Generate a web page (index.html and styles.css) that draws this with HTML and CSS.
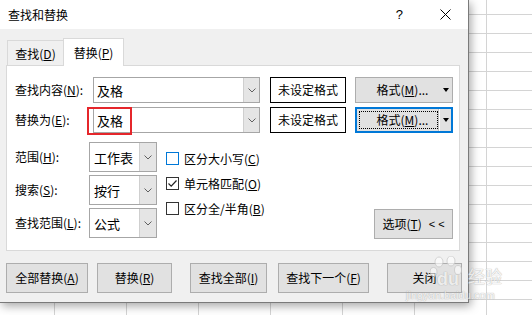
FILE: index.html
```html
<!DOCTYPE html>
<html lang="zh-CN">
<head>
<meta charset="utf-8">
<title>查找和替换</title>
<link rel="stylesheet" href="styles.css">
</head>
<body>
<div class="dialog">
  <div class="titlebar">
    <span class="title">查找和替换</span>
    <span class="help">?</span>
    <span class="close"><svg width="11" height="11" viewBox="0 0 11 11"><path d="M0.5 0.5L10.5 10.5M10.5 0.5L0.5 10.5" stroke="#000" stroke-width="1" fill="none"/></svg></span>
  </div>
  <div class="body">
    <div class="tabs">
      <div class="tab">查找(<u>D</u>)</div>
      <div class="tab active">替换(<u>P</u>)</div>
    </div>
    <div class="panel">
      <div class="row">
        <span class="label">查找内容(<u>N</u>):</span>
        <div class="combo wide"><span class="combo-text">及格</span><span class="combo-btn"><svg width="8" height="5" viewBox="0 0 8 5"><path d="M0.5 0.5L4 4L7.5 0.5" stroke="#606060" fill="none"/></svg></span></div>
        <div class="fmtbox">未设定格式</div>
        <div class="fmtbtn"><span class="fmt-main">格式(<u>M</u>)...</span><span class="fmt-arrow"><i class="tri"></i></span></div>
      </div>
      <div class="row row2">
        <span class="label">替换为(<u>E</u>):</span>
        <div class="combo wide"><span class="combo-text">及格</span><span class="combo-btn"><svg width="8" height="5" viewBox="0 0 8 5"><path d="M0.5 0.5L4 4L7.5 0.5" stroke="#606060" fill="none"/></svg></span><span class="redmark"></span></div>
        <div class="fmtbox">未设定格式</div>
        <div class="fmtbtn focused"><span class="fmt-main"><span class="focusrect">格式(<u>M</u>)...</span></span><span class="sep"></span><span class="fmt-arrow"><i class="tri"></i></span></div>
      </div>
      <div class="options">
        <div class="opt-grid">
          <span class="label">范围(<u>H</u>):</span>
          <div class="combo small"><span class="combo-text">工作表</span><span class="combo-btn"><svg width="8" height="5" viewBox="0 0 8 5"><path d="M0.5 0.5L4 4L7.5 0.5" stroke="#606060" fill="none"/></svg></span></div>
          <span class="label">搜索(<u>S</u>):</span>
          <div class="combo small"><span class="combo-text">按行</span><span class="combo-btn"><svg width="8" height="5" viewBox="0 0 8 5"><path d="M0.5 0.5L4 4L7.5 0.5" stroke="#606060" fill="none"/></svg></span></div>
          <span class="label">查找范围(<u>L</u>):</span>
          <div class="combo small"><span class="combo-text">公式</span><span class="combo-btn"><svg width="8" height="5" viewBox="0 0 8 5"><path d="M0.5 0.5L4 4L7.5 0.5" stroke="#606060" fill="none"/></svg></span></div>
        </div>
        <div class="checks">
          <div class="check"><span class="box hover"></span>区分大小写(<u>C</u>)</div>
          <div class="check"><span class="box"><svg width="11" height="11" viewBox="0 0 11 11"><path d="M1.5 5.5L4.2 8.2L9.5 2.5" stroke="#222" stroke-width="1.2" fill="none"/></svg></span>单元格匹配(<u>O</u>)</div>
          <div class="check"><span class="box"></span>区分全/半角(<u>B</u>)</div>
        </div>
        <div class="btn optbtn">选项(<u>T</u>)<span class="lt">&lt; &lt;</span></div>
      </div>
    </div>
    <div class="buttons">
      <div class="btn b1">全部替换(<u>A</u>)</div>
      <div class="btn b2">替换(<u>R</u>)</div>
      <div class="btn b3">查找全部(<u>I</u>)</div>
      <div class="btn b4">查找下一个(<u>F</u>)</div>
      <div class="btn b5">关闭</div>
    </div>
  </div>
</div>
<div class="watermark">
  <svg class="paw" width="34" height="32" viewBox="0 0 34 32">
    <ellipse cx="9" cy="6" rx="4" ry="5" />
    <ellipse cx="21" cy="5" rx="4" ry="5" />
    <ellipse cx="3.5" cy="16" rx="3.5" ry="4.5" />
    <ellipse cx="28" cy="14" rx="3.5" ry="4.5" />
  </svg>
  <span class="wm-du">du</span><span class="wm-jy">经验</span>
  <span class="wm-url">jingyan.baidu.com</span>
</div>
</body>
</html>
```
FILE: styles.css
```css
* { box-sizing: border-box; }
html, body { margin: 0; padding: 0; }
body {
  width: 532px;
  height: 315px;
  overflow: hidden;
  position: relative;
  font-family: "Noto Sans CJK SC", "Microsoft YaHei", sans-serif;
  font-size: 12px;
  line-height: 1;
  color: #000;
  background-color: #fff;
  background-image:
    linear-gradient(to right, #d4d4d4 1px, transparent 1px),
    linear-gradient(to bottom, #d4d4d4 1px, transparent 1px);
  background-size: 72px 100%, 100% 19px;
  background-position: 54px 0, 0 14px;
}
u { text-decoration: underline; text-underline-offset: 1px; }

.dialog {
  width: 469px;
  height: 303px;
  background: #f0f0f0;
  border-right: 1px solid #7a7a7a;
  border-bottom: 1px solid #7a7a7a;
  box-shadow: 2px 3px 9px rgba(0, 0, 0, 0.35);
  display: flex;
  flex-direction: column;
}
.titlebar {
  height: 29px;
  background: #fff;
  display: flex;
  align-items: center;
  padding: 0 17px 0 8px;
}
.title { flex: 1; font-size: 12px; }
.help { font-size: 13px; margin-right: 37px; font-family: "Liberation Sans", sans-serif; }
.close { display: flex; }

.body { flex: 1; padding: 9px 0 0 6px; }

.tabs {
  display: flex;
  align-items: flex-end;
  height: 27px;
  margin-left: 1px;
}
.tab {
  height: 25px;
  border: 1px solid #d9d9d9;
  border-bottom: none;
  background: #f0f0f0;
  display: flex;
  align-items: center;
  justify-content: center;
  width: 57px;
  padding-top: 2px;
}
.tab.active {
  width: 61px;
  height: 28px;
  margin-left: -1px;
  margin-bottom: -1px;
  background: #fff;
  position: relative;
  z-index: 1;
  padding-top: 0;
}

.panel {
  width: 454px;
  height: 186px;
  background: #fff;
  border: 1px solid #d9d9d9;
  padding: 11px 6px 0 8px;
}
.row { display: flex; height: 26px; align-items: stretch; }
.row2 { margin-top: 4px; }
.label { display: flex; align-items: center; white-space: nowrap; }
.row .label { width: 78px; }

.combo {
  display: flex;
  border: 1px solid #a6a6a6;
  background: #fff;
  position: relative;
}
.combo.wide { width: 167px; }
.combo-text { flex: 1; display: flex; align-items: center; padding-left: 3px; font-size: 13px; }
.combo-btn {
  width: 16px;
  background: #e5e5e5;
  border-left: 1px solid #cfcfcf;
  display: flex;
  align-items: center;
  justify-content: center;
}
.redmark {
  position: absolute;
  left: -7px;
  top: -1px;
  width: 45px;
  height: 28px;
  border: 2px solid #e5262b;
}

.fmtbox {
  width: 76px;
  margin-left: 10px;
  border: 1px solid #000;
  display: flex;
  align-items: center;
  justify-content: center;
}
.fmtbtn {
  width: 98px;
  margin-left: 9px;
  background: #e1e1e1;
  border: 1px solid #adadad;
  display: flex;
}
.fmt-main {
  width: 83px;
  display: flex;
  align-items: center;
  justify-content: center;
  padding-left: 10px;
}
.fmt-arrow { flex: 1; display: flex; align-items: center; justify-content: center; }
.tri {
  width: 0; height: 0;
  border-left: 3.5px solid transparent;
  border-right: 3.5px solid transparent;
  border-top: 4px solid #000;
}
.fmtbtn.focused { border: 2px solid #0078d7; }
.fmtbtn.focused .fmt-main { width: 81px; padding: 2px 0 2px 2px; }
.focusrect {
  flex: 1;
  align-self: stretch;
  border: 1px dotted #000;
  display: flex;
  align-items: center;
  justify-content: center;
  padding-left: 8px;
}
.sep { background: #fff; border-left: 1px solid #c0c0c0; width: 2px; }

.options { display: flex; margin-top: 9px; height: 98px; }
.opt-grid {
  display: grid;
  grid-template-columns: 74px 68px;
  grid-auto-rows: 30px;
  row-gap: 3px;
}
.combo.small .combo-text { font-size: 13px; padding-left: 4px; }
.combo.small .combo-btn { width: 17px; }

.checks { margin-left: 9px; padding-top: 4px; }
.check { display: flex; align-items: center; height: 25px; }
.box {
  width: 13px; height: 13px;
  border: 1px solid #333;
  margin-right: 5px;
  display: flex; align-items: center; justify-content: center;
}
.box.hover { border-color: #0078d7; }

.btn {
  background: #e1e1e1;
  border: 1px solid #adadad;
  display: flex;
  align-items: center;
  justify-content: center;
}
.optbtn {
  margin-left: auto;
  align-self: flex-end;
  width: 79px;
  height: 30px;
  margin-bottom: 1px;
}
.lt { margin-left: 7px; font-size: 11px; font-family: "Liberation Sans", sans-serif; }

.buttons { display: flex; margin-top: 12px; height: 30px; }
.b1 { width: 82px; }
.b2 { width: 75px; margin-left: 9px; }
.b3 { width: 77px; margin-left: 18px; }
.b4 { width: 91px; margin-left: 11px; }
.b5 { width: 75px; margin-left: 18px; }

.watermark {
  position: absolute;
  left: 404px;
  top: 255px;
  width: 110px;
  height: 50px;
  opacity: 0.7;
  pointer-events: none;
}
.paw { position: absolute; left: 26px; top: 1px; }
.paw ellipse { fill: rgba(255,255,255,0.85); stroke: #c8c8c8; stroke-width: 1; }
.wm-du, .wm-jy, .wm-url {
  position: absolute;
  color: rgba(255,255,255,0.9);
  text-shadow: 0 0 1px #a0a0a0, 0 0 1px #a0a0a0;
  font-family: "Liberation Sans", sans-serif;
}
.wm-du { left: 33px; top: 15px; font-size: 18px; font-weight: bold; }
.wm-jy { left: 64px; top: 12px; font-size: 17px; font-family: "Noto Sans CJK SC", sans-serif; }
.wm-url { left: 2px; top: 35px; font-size: 11px; }
```
